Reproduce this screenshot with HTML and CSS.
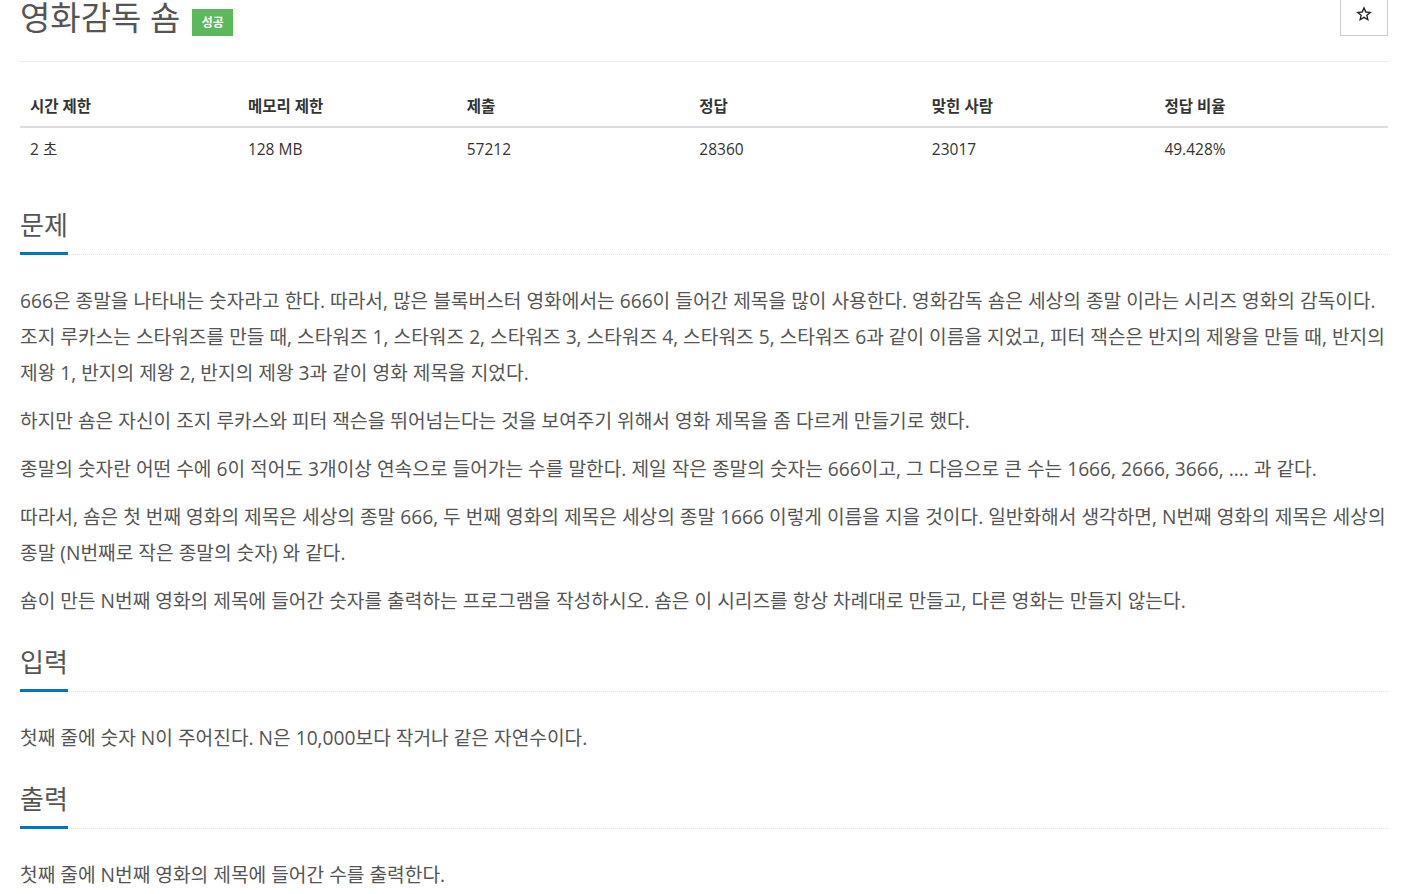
FILE: index.html
```html
<!DOCTYPE html>
<html lang="ko">
<head>
<meta charset="utf-8">
<title>영화감독 숌</title>
<link rel="stylesheet" href="styles.css">
</head>
<body>
<div class="page">
  <div class="page-header">
    <h1 class="title">영화감독 숌 <span class="label-ac">성공</span></h1>
    <button class="star-btn" type="button" aria-label="즐겨찾기">
      <svg width="16" height="16" viewBox="0 0 24 24"><path d="M12 2.8l2.7 6.2 6.7.6-5.1 4.4 1.5 6.6L12 17.1l-5.8 3.5 1.5-6.6-5.1-4.4 6.7-.6z" fill="none" stroke="#222" stroke-width="2" stroke-linejoin="miter"/></svg>
    </button>
  </div>

  <table class="info">
    <thead>
      <tr><th class="c16">시간 제한</th><th class="c16">메모리 제한</th><th class="c17">제출</th><th class="c17">정답</th><th class="c17">맞힌 사람</th><th class="c17">정답 비율</th></tr>
    </thead>
    <tbody>
      <tr><td>2 초</td><td>128 MB</td><td>57212</td><td>28360</td><td>23017</td><td>49.428%</td></tr>
    </tbody>
  </table>

  <section class="sec">
    <div class="headline"><h2>문제</h2></div>
    <div class="text">
      <p>666은 종말을 나타내는 숫자라고 한다. 따라서, 많은 블록버스터 영화에서는 666이 들어간 제목을 많이 사용한다. 영화감독 숌은 세상의 종말 이라는 시리즈 영화의 감독이다. 조지 루카스는 스타워즈를 만들 때, 스타워즈 1, 스타워즈 2, 스타워즈 3, 스타워즈 4, 스타워즈 5, 스타워즈 6과 같이 이름을 지었고, 피터 잭슨은 반지의 제왕을 만들 때, 반지의 제왕 1, 반지의 제왕 2, 반지의 제왕 3과 같이 영화 제목을 지었다.</p>
      <p>하지만 숌은 자신이 조지 루카스와 피터 잭슨을 뛰어넘는다는 것을 보여주기 위해서 영화 제목을 좀 다르게 만들기로 했다.</p>
      <p>종말의 숫자란 어떤 수에 6이 적어도 3개이상 연속으로 들어가는 수를 말한다. 제일 작은 종말의 숫자는 666이고, 그 다음으로 큰 수는 1666, 2666, 3666, .... 과 같다.</p>
      <p>따라서, 숌은 첫 번째 영화의 제목은 세상의 종말 666, 두 번째 영화의 제목은 세상의 종말 1666 이렇게 이름을 지을 것이다. 일반화해서 생각하면, N번째 영화의 제목은 세상의 종말 (N번째로 작은 종말의 숫자) 와 같다.</p>
      <p>숌이 만든 N번째 영화의 제목에 들어간 숫자를 출력하는 프로그램을 작성하시오. 숌은 이 시리즈를 항상 차례대로 만들고, 다른 영화는 만들지 않는다.</p>
    </div>
  </section>

  <section class="sec">
    <div class="headline"><h2>입력</h2></div>
    <div class="text">
      <p>첫째 줄에 숫자 N이 주어진다. N은 10,000보다 작거나 같은 자연수이다.</p>
    </div>
  </section>

  <section class="sec">
    <div class="headline"><h2>출력</h2></div>
    <div class="text">
      <p>첫째 줄에 N번째 영화의 제목에 들어간 수를 출력한다.</p>
    </div>
  </section>
</div>
</body>
</html>
```

FILE: styles.css
```css
* { box-sizing: border-box; }
html, body { margin: 0; padding: 0; background: #fff; }
body {
  font-family: "Open Sans", "Noto Sans CJK KR", sans-serif;
  color: #555;
  overflow: hidden;
}
.page {
  width: 1368px;
  margin-left: 20px;
  margin-top: -14px;
}
.page-header {
  display: flex;
  justify-content: space-between;
  align-items: flex-start;
  border-bottom: 1px solid #eee;
  height: 76px;
}
.title {
  margin: 8px 0 0;
  font-size: 33px;
  font-weight: 400;
  line-height: 48px;
  color: #555;
  display: flex;
  align-items: center;
}
.label-ac {
  display: inline-block;
  margin-left: 12px;
  margin-top: 8px;
  background: #5cb85c;
  color: #fff;
  font-size: 12px;
  font-weight: 700;
  width: 41px;
  height: 27px;
  line-height: 27px;
  text-align: center;
}
.star-btn {
  width: 48px;
  height: 50px;
  border: 1px solid #ccc;
  background: #fff;
  border-radius: 0;
  padding: 0;
  display: flex;
  align-items: center;
  justify-content: center;
  padding-top: 6px;
}
.info {
  width: 100%;
  border-collapse: collapse;
  margin-top: 23px;
  margin-bottom: 35px;
}
.info th {
  text-align: left;
  font-size: 15.5px;
  font-weight: 700;
  color: #333;
  padding: 8px 10px 8px 9px;
  line-height: 20px;
  height: 42px;
  border-bottom: 2px solid #ddd;
}
.info td {
  text-align: left;
  font-size: 15.5px;
  color: #333;
  padding: 10px 10px 10px 9px;
  line-height: 22px;
}
.info th:first-child, .info td:first-child { padding-left: 10px; }
.c16 { width: 16%; }
.c17 { width: 17%; }
.headline {
  margin-top: 23px;
  border-bottom: 1px dotted #ddd;
  height: 50px;
}
.headline h2 {
  display: inline-block;
  margin: 0;
  font-size: 26px;
  font-weight: 400;
  line-height: 40px;
  color: #555;
  padding-bottom: 7px;
  border-bottom: 3px solid #0076c0;
  height: 50px;
}
.text {
  margin-top: 28px;
  font-size: 19.2px;
  line-height: 36px;
}
.text p { margin: 0 0 12px; }
```
